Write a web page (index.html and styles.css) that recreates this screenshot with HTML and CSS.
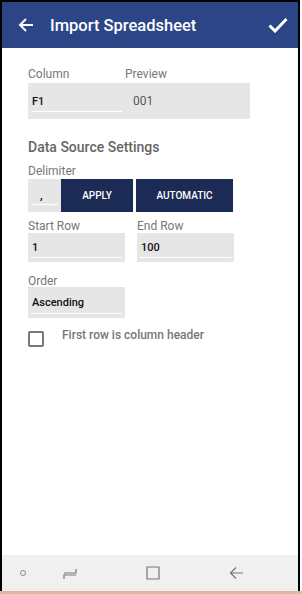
FILE: index.html
```html
<!DOCTYPE html>
<html lang="en">
<head>
    <meta charset="UTF-8">
    <meta name="viewport" content="width=device-width, initial-scale=1.0">
    <title>Import Spreadsheet</title>
    <link rel="stylesheet" href="styles.css">
</head>
<body>
    <div class="frame">
        <header class="toolbar">
            <svg class="back" width="16" height="16" viewBox="0 0 16 16">
                <path d="M15 8H2M8 2L2 8l6 6" fill="none" stroke="#fff" stroke-width="2"/>
            </svg>
            <h1>Import Spreadsheet</h1>
            <svg class="done" width="20" height="16" viewBox="0 0 20 16">
                <path d="M1.5 8.5l5.5 5.5L18.5 2" fill="none" stroke="#fff" stroke-width="3"/>
            </svg>
        </header>

        <main class="content">
            <div class="labels">
                <span class="label col-a">Column</span>
                <span class="label">Preview</span>
            </div>
            <div class="preview-box">
                <div class="field col-a"><span class="value">F1</span></div>
                <span class="preview-value">001</span>
            </div>

            <h2>Data Source Settings</h2>

            <span class="label">Delimiter</span>
            <div class="delim-row">
                <div class="field delim"><span class="value">,</span></div>
                <button class="btn apply">APPLY</button>
                <button class="btn auto">AUTOMATIC</button>
            </div>

            <div class="pair">
                <div class="group">
                    <span class="label">Start Row</span>
                    <div class="field box"><span class="value">1</span></div>
                </div>
                <div class="group">
                    <span class="label">End Row</span>
                    <div class="field box"><span class="value">100</span></div>
                </div>
            </div>

            <div class="group order">
                <span class="label">Order</span>
                <div class="field box tall"><span class="value">Ascending</span></div>
            </div>

            <label class="check">
                <span class="checkbox"></span>
                <span class="check-text">First row is column header</span>
            </label>
        </main>

        <nav class="navbar">
            <span class="dot"></span>
            <svg width="14" height="14" viewBox="0 0 14 14">
                <path d="M13 3v4H1M1 13V9h12" fill="none" stroke="#777" stroke-width="1.2"/>
            </svg>
            <svg width="14" height="14" viewBox="0 0 14 14">
                <path d="M1 1h12v12H1z" fill="none" stroke="#777" stroke-width="1.2"/>
            </svg>
            <svg width="14" height="14" viewBox="0 0 14 14">
                <path d="M14 7H1.5M7 1.5L1.5 7 7 12.5" fill="none" stroke="#777" stroke-width="1.2"/>
            </svg>
        </nav>
    </div>
    <div class="bottom-line"></div>
</body>
</html>
```

FILE: styles.css
```css
body {
    margin: 0;
    font-family: Roboto, "Liberation Sans", sans-serif;
    background: #fff;
    width: 302px;
    height: 594px;
    overflow: hidden;
}

.frame {
    width: 300px;
    height: 591px;
    border-top: 2px solid #000;
    border-left: 2px solid #000;
    border-right: 2px solid #000;
    box-sizing: border-box;
    display: flex;
    flex-direction: column;
}

.toolbar {
    height: 46px;
    background: #2b4587;
    display: flex;
    align-items: center;
    padding: 0 10px 0 16px;
    flex-shrink: 0;
}

.toolbar h1 {
    margin: 0 0 0 16px;
    flex: 1;
    color: #fff;
    font-size: 16.5px;
    font-weight: 500;
}

.content {
    flex: 1;
    padding: 0 0 0 26px;
    display: flex;
    flex-direction: column;
    color: #777;
}

.label {
    font-size: 12px;
    color: #777;
    line-height: 14px;
}

.labels {
    display: flex;
    margin-top: 19px;
}

.col-a {
    width: 97px;
}

.preview-box {
    width: 222px;
    height: 36px;
    background: #e6e6e6;
    display: flex;
    align-items: center;
    margin-top: 2px;
}

.field {
    position: relative;
    height: 100%;
    display: flex;
    align-items: center;
    box-sizing: border-box;
}

.field::after {
    content: "";
    position: absolute;
    left: 3px;
    right: 3px;
    bottom: 7px;
    border-bottom: 1px solid #fff;
}

.value {
    font-size: 11px;
    font-weight: 500;
    color: #111;
    padding-left: 4px;
}

.preview-value {
    font-size: 12px;
    color: #555;
    margin-left: 8px;
}

h2 {
    margin: 20px 0 0;
    font-size: 14px;
    font-weight: 500;
    color: #666;
    line-height: 16px;
}

.content > .label {
    margin-top: 9px;
}

.delim-row {
    display: flex;
    height: 33px;
    margin-top: 1px;
}

.delim {
    width: 33px;
    background: #e6e6e6;
}

.delim .value {
    padding-left: 12px;
    font-weight: 700;
}

.btn {
    border: none;
    background: #1c2a56;
    color: #fff;
    font-family: inherit;
    font-size: 10px;
    font-weight: 500;
    padding: 0;
    height: 33px;
}

.apply {
    width: 72px;
}

.auto {
    width: 97px;
    margin-left: 3px;
}

.pair {
    display: flex;
    gap: 12px;
    margin-top: 8px;
}

.group {
    display: flex;
    flex-direction: column;
}

.group .label {
    line-height: 12px;
}

.box {
    width: 97px;
    height: 29px;
    background: #e6e6e6;
    margin-top: 1px;
}

.box::after {
    bottom: 4px;
}

.order {
    margin-top: 13px;
}

.tall {
    height: 31px;
    margin-top: 0;
}

.check {
    display: flex;
    align-items: flex-start;
    margin-top: 10px;
}

.checkbox {
    width: 12px;
    height: 12px;
    border: 2px solid #777;
    border-radius: 2px;
    margin-top: 3px;
}

.check-text {
    margin-left: 18px;
    font-size: 12px;
    font-weight: 500;
    color: #777;
    line-height: 14px;
}

.navbar {
    height: 36px;
    background: #f0f0f0;
    display: flex;
    align-items: center;
    flex-shrink: 0;
    padding-left: 18px;
}

.navbar .dot {
    width: 4px;
    height: 4px;
    border: 1px solid #888;
    border-radius: 50%;
    margin-right: 37px;
}

.navbar svg:nth-of-type(1) {
    margin-right: 69px;
}

.navbar svg:nth-of-type(2) {
    margin-right: 69px;
}

.bottom-line {
    height: 3px;
    background: #d9b8a3;
}
```
